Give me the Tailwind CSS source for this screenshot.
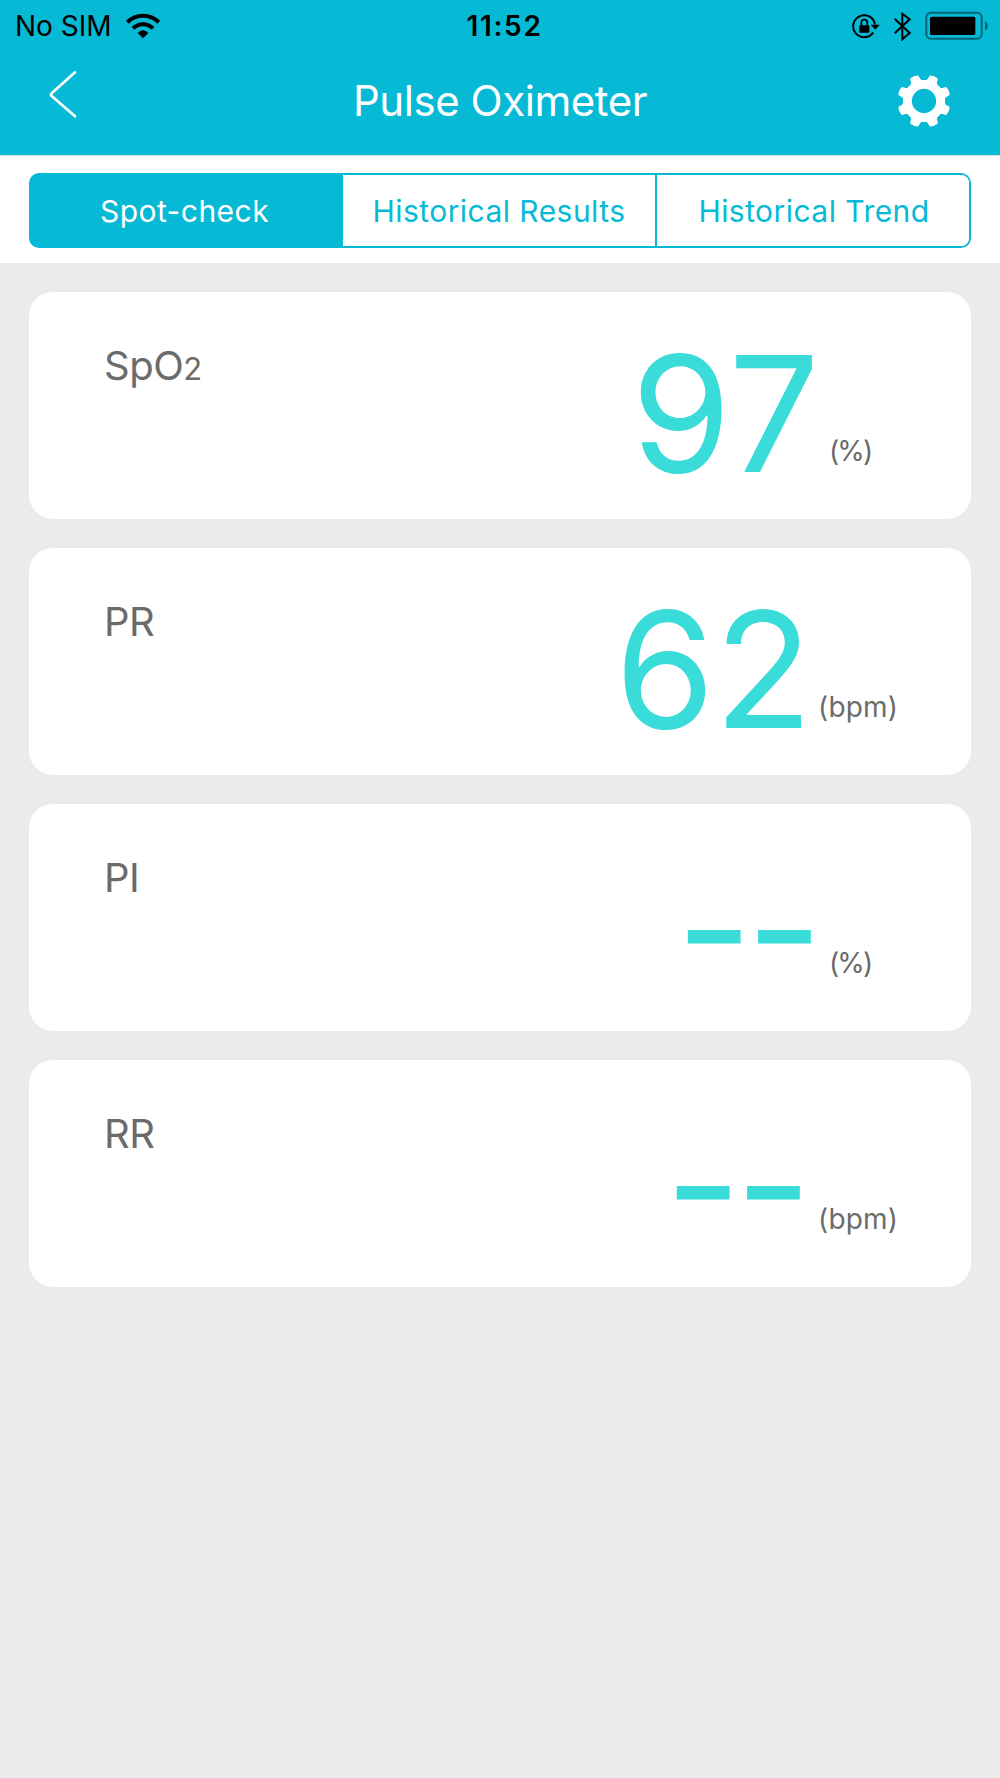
<!DOCTYPE html>
<html lang="en">
  <head>
    <meta charset="UTF-8" />
    <meta name="viewport" content="width=device-width, initial-scale=1.0" />
    <title>Pulse Oximeter</title>
    <script src="https://cdn.jsdelivr.net/npm/@tailwindcss/browser@4"></script>
  </head>
  <body
    class="bg-[#ebebeb] w-[1000px] h-[1778px] overflow-hidden font-['Inter','Liberation_Sans',sans-serif] whitespace-nowrap"
  >
    <header class="bg-[#06bad6] h-[155px]">
      <!-- status bar -->
      <div class="grid grid-cols-3 h-[50px] items-center text-black">
        <div class="flex items-center pl-[15px] gap-[13px]">
          <span class="text-[28px] leading-[50px] w-[98px] pt-px">No SIM</span>
          <svg class="w-[34px] h-[26px]" viewBox="377 34 102 78">
            <path d="M381 62A66 66 0 0 1 475 62" fill="none" stroke="#000" stroke-width="12" />
            <path d="M398 80A42 42 0 0 1 458 80" fill="none" stroke="#000" stroke-width="12" />
            <path d="M412 94Q428 78 444 94L428 110Z" />
          </svg>
        </div>
        <div class="text-center text-[28px] leading-[50px] font-semibold pl-[9px] tracking-[1.7px]">11:52</div>
        <div class="flex items-center justify-end pr-[12px]">
          <svg class="w-[136px] h-[30px]" viewBox="155 28 408 90">
            <!-- rotation lock -->
            <path d="M224 68A33 33 0 1 0 219 92" fill="none" stroke="#000" stroke-width="6" />
            <path d="M211 69H238L225 84Z" />
            <rect x="177" y="71" width="30" height="22" rx="3" />
            <path d="M183 73V63A9 9 0 0 1 201 63V73" fill="none" stroke="#000" stroke-width="5" />
            <!-- bluetooth -->
            <path d="M283 51L328 94L306 113V36L328 53L283 95" fill="none" stroke="#000" stroke-width="6" />
            <!-- battery -->
            <rect x="378" y="33" width="166" height="78" rx="14" fill="none" stroke="#000" stroke-opacity=".45" stroke-width="6" />
            <rect x="389" y="45" width="136" height="55" rx="5" />
            <path d="M554 57Q563 63 563 72T554 87Z" fill-opacity=".45" />
          </svg>
        </div>
      </div>
      <!-- nav bar -->
      <div class="grid grid-cols-[200px_1fr_200px] items-start h-[104px] text-white">
        <svg class="w-[30px] h-[50px] ml-[48px] mt-[19px]" viewBox="144 207 90 150">
          <path d="M225 217L155 280Q151 284 155 288L225 349" fill="none" stroke="#fff" stroke-width="8" stroke-linecap="round" />
        </svg>
        <h1 class="text-[42px] leading-[50px] mt-[26px] text-center tracking-[-0.45px]">Pulse Oximeter</h1>
        <svg class="w-[54px] h-[54px] justify-self-end mr-[49px] mt-[24px]" viewBox="-81 -81 162 162" fill="#fff">
          <defs>
            <path id="tooth" d="M-27 -54L-24 -58Q-16 -60 -14.5 -66L-14 -74Q-14 -77 -11 -78.5Q0 -82 11 -78.5Q14 -77 14 -74L14.5 -66Q16 -60 24 -58L27 -54Z" />
          </defs>
          <circle r="49.5" fill="none" stroke="#fff" stroke-width="26" />
          <use href="#tooth" transform="rotate(22.5)" />
          <use href="#tooth" transform="rotate(67.5)" />
          <use href="#tooth" transform="rotate(112.5)" />
          <use href="#tooth" transform="rotate(157.5)" />
          <use href="#tooth" transform="rotate(202.5)" />
          <use href="#tooth" transform="rotate(247.5)" />
          <use href="#tooth" transform="rotate(292.5)" />
          <use href="#tooth" transform="rotate(337.5)" />
        </svg>
      </div>
    </header>
    <nav class="bg-white h-[108px] px-[29px] pt-[17px] border-t border-[#d5e3e6]">
      <div
        class="grid grid-cols-[312px_314px_1fr] h-[75px] border-2 border-[#06bad6] bg-[linear-gradient(90deg,#06bad6_50%,#fff_50%)] rounded-[10px] overflow-hidden text-[30px] leading-[72px] text-center text-[#06bad6] tracking-[0.45px]"
      >
        <div class="bg-[#06bad6] text-white pr-[5px]">Spot-check</div>
        <div class="bg-white border-r-2 border-[#06bad6]">Historical Results</div>
        <div class="bg-white pl-[2px]">Historical Trend</div>
      </div>
    </nav>
    <main class="flex flex-col gap-[29px] px-[29px] pt-[29px] text-[#6b6b6b]">
      <section class="flex justify-between bg-white h-[227px] rounded-[24px] pl-[75px]">
        <h2 class="text-[40px] leading-[50px] mt-[49px] tracking-[-0.5px]">SpO<span class="text-[31px]">2</span></h2>
        <div class="flex items-baseline pt-[8px]">
          <span class="text-[161px] leading-[227px] text-[#3adcd9] mr-[9px] tracking-[0.5px]">97</span>
          <span class="text-[28px] w-[142px] relative -top-[11px] tracking-[-1.9px]">(%)</span>
        </div>
      </section>
      <section class="flex justify-between bg-white h-[227px] rounded-[24px] pl-[75px]">
        <h2 class="text-[40px] leading-[50px] mt-[49px] tracking-[-0.5px]">PR</h2>
        <div class="flex items-baseline pt-[8px]">
          <span class="text-[161px] leading-[227px] text-[#3adcd9] mr-[6px] tracking-[-0.5px]">62</span>
          <span class="text-[28px] w-[153px] relative -top-[11px] tracking-[0.2px]">(bpm)</span>
        </div>
      </section>
      <section class="flex justify-between bg-white h-[227px] rounded-[24px] pl-[75px]">
        <h2 class="text-[40px] leading-[50px] mt-[49px] tracking-[-0.5px]">PI</h2>
        <div class="flex items-baseline pt-[8px]">
          <span class="text-[165px] leading-[227px] text-[#3adcd9] mr-[12px] tracking-[-5.5px] relative top-[3px]">--</span>
          <span class="text-[28px] w-[142px] relative -top-[12px] tracking-[-1.9px]">(%)</span>
        </div>
      </section>
      <section class="flex justify-between bg-white h-[227px] rounded-[24px] pl-[75px]">
        <h2 class="text-[40px] leading-[50px] mt-[49px] tracking-[-0.5px]">RR</h2>
        <div class="flex items-baseline pt-[8px]">
          <span class="text-[165px] leading-[227px] text-[#3adcd9] mr-[12px] tracking-[-5.5px] relative top-[3px]">--</span>
          <span class="text-[28px] w-[153px] relative -top-[12px] tracking-[0.2px]">(bpm)</span>
        </div>
      </section>
    </main>
  </body>
</html>
